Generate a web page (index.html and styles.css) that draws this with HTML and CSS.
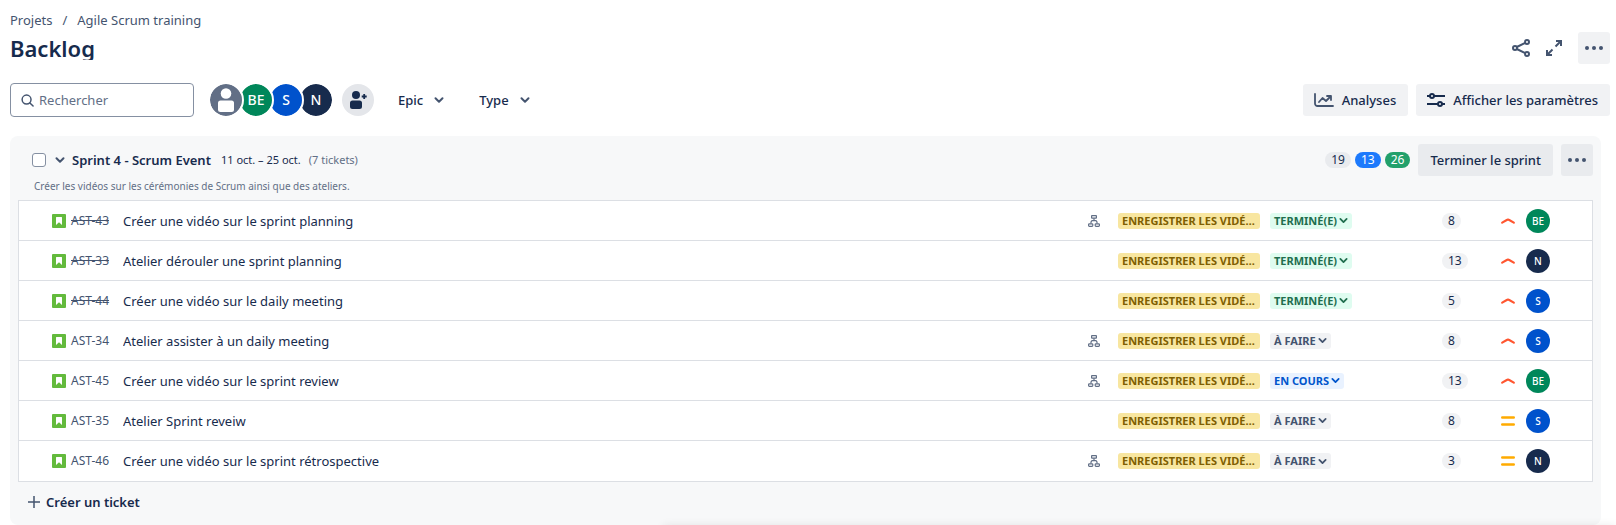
FILE: index.html
```
<!DOCTYPE html>
<html lang="fr">
<head>
    <meta charset="UTF-8">
    <meta name="viewport" content="width=device-width, initial-scale=1.0">
    <title>Backlog - Agile Scrum training</title>
    <link rel="stylesheet" href="styles.css">
</head>
<body>

    <!-- shared icons -->
    <svg class="sprite" aria-hidden="true">
        <symbol id="chevron" viewBox="0 0 10 10"><path d="M1.5 3.3 5 6.7l3.500-3.400" fill="none" stroke="currentColor" stroke-width="2" stroke-linecap="round" stroke-linejoin="round"/></symbol>
        <symbol id="dots" viewBox="0 0 18 4"><circle cx="2" cy="2" r="2"/><circle cx="9" cy="2" r="2"/><circle cx="16" cy="2" r="2"/></symbol>
        <symbol id="story" viewBox="0 0 14 14"><rect width="14" height="14" rx="1" fill="#63ba3c"/><path d="M4 3.5a.5.5 0 0 1 .5-.5h5a.5.5 0 0 1 .5.5V11L7 8.300 4 11z" fill="#fff"/></symbol>
        <symbol id="subtasks" viewBox="0 0 12 12"><g fill="none" stroke="currentColor" stroke-width="1.2"><rect x="3.6" y=".6" width="4.8" height="2.6" rx=".4"/><path d="M6 3.2v2.4M3 8.6V7l1-1.3h4L9 7v1.6"/><rect x=".6" y="8.8" width="4.2" height="2.6" rx=".8"/><rect x="7.2" y="8.8" width="4.2" height="2.6" rx=".8"/></g></symbol>
        <symbol id="high" viewBox="0 0 14 6"><path d="M1.2 4.6 6.2 1.8a1.500 1.500 0 0 1 1.600 0l5 2.800" fill="none" stroke="#ff5630" stroke-width="2.2" stroke-linecap="round"/></symbol>
        <symbol id="medium" viewBox="0 0 14 10"><path d="M1.200 1.500h11.600M1.200 8.500h11.600" stroke="#ffab00" stroke-width="2.400" stroke-linecap="round"/></symbol>
    </svg>

    <header class="page-header">
        <nav class="breadcrumb">
            <a href="#">Projets</a>
            <span>/</span>
            <a href="#">Agile Scrum training</a>
        </nav>
        <div class="title-row">
            <h1>Backlog</h1>
            <div class="title-actions">
                <button class="icon-btn" aria-label="Partager">
                    <svg width="18" height="18" viewBox="0 0 18 18" fill="none" stroke="currentColor" stroke-width="2"><circle cx="3" cy="9" r="2"/><circle cx="15" cy="3" r="2"/><circle cx="15" cy="15" r="2"/><path d="M4.800 8 13.200 3.900M4.800 10l8.400 4.100"/></svg>
                </button>
                <button class="icon-btn" aria-label="Plein écran">
                    <svg width="16" height="16" viewBox="0 0 16 16" fill="none" stroke="currentColor" stroke-width="2"><path d="M10 1h5v5M15 1 9.500 6.500M6 15H1v-5M1 15l5.500-5.500"/></svg>
                </button>
                <button class="btn more" aria-label="Plus"><svg width="18" height="4"><use href="#dots"/></svg></button>
            </div>
        </div>
    </header>

    <div class="toolbar">
        <label class="search">
            <svg width="13" height="13" viewBox="0 0 14 14" fill="none" stroke="currentColor" stroke-width="1.600" stroke-linecap="round"><circle cx="6" cy="6" r="4.800"/><path d="m9.600 9.600 3.400 3.400"/></svg>
            <input type="text" placeholder="Rechercher" aria-label="Rechercher">
        </label>
        <div class="people">
            <button class="avatar gray" aria-label="Non assigné">
                <svg width="32" height="32" viewBox="0 0 32 32" fill="#fff"><circle cx="16" cy="9.500" r="5.300"/><path d="M8 19a2.500 2.500 0 0 1 2.500-2.500h11A2.500 2.500 0 0 1 24 19v6.500a2.500 2.500 0 0 1-2.500 2.500h-11A2.500 2.500 0 0 1 8 25.500z"/></svg>
            </button>
            <button class="avatar green">BE</button>
            <button class="avatar blue">S</button>
            <button class="avatar navy">N</button>
        </div>
        <button class="add-people" aria-label="Ajouter des personnes">
            <svg width="18" height="18" viewBox="0 0 18 18" fill="currentColor"><circle cx="7" cy="4" r="4"/><path d="M1 12a2.500 2.500 0 0 1 2.500-2.500h7A2.500 2.500 0 0 1 13 12v3.500a2.500 2.500 0 0 1-2.500 2.500h-7A2.500 2.500 0 0 1 1 15.500z"/><path d="M15.200 3v5M12.700 5.500h5" stroke="currentColor" stroke-width="1.800"/></svg>
        </button>
        <button class="filter epic-filter">Epic <svg width="10" height="10"><use href="#chevron"/></svg></button>
        <button class="filter">Type <svg width="10" height="10"><use href="#chevron"/></svg></button>
        <div class="toolbar-right">
            <button class="btn analyses">
                <svg width="20" height="14" viewBox="0 0 20 14" fill="none" stroke="currentColor" stroke-width="1.800" stroke-linecap="round" stroke-linejoin="round"><path d="M1 1v9.500A2.500 2.500 0 0 0 3.500 13H19"/><path d="m5 9 3.500-4 3.500 3 4.500-4.500M13 3h4v4"/></svg>
                Analyses
            </button>
            <button class="btn settings">
                <svg width="18" height="14" viewBox="0 0 18 14" fill="none" stroke="currentColor" stroke-width="2"><path d="M0 3h3M7 3h11M0 11h11M15 11h3"/><circle cx="5" cy="3" r="2"/><circle cx="13" cy="11" r="2"/></svg>
                Afficher les paramètres
            </button>
        </div>
    </div>

    <main class="sprint">
        <div class="sprint-header">
            <input type="checkbox" class="check" aria-label="Sélectionner le sprint">
            <button class="toggle" aria-label="Réduire"><svg width="10" height="10"><use href="#chevron"/></svg></button>
            <h2>Sprint 4 - Scrum Event</h2>
            <span class="dates">11 oct. – 25 oct.</span>
            <span class="count">(7 tickets)</span>
            <div class="sprint-right">
                <span class="badge">19</span>
                <span class="badge progress">13</span>
                <span class="badge done">26</span>
                <button class="btn finish">Terminer le sprint</button>
                <button class="btn more" aria-label="Plus"><svg width="18" height="4"><use href="#dots"/></svg></button>
            </div>
        </div>
        <p class="goal">Créer les vidéos sur les cérémonies de Scrum ainsi que des ateliers.</p>

        <ul class="issues">
            <li class="issue">
                <svg class="type" width="14" height="14"><use href="#story"/></svg>
                <a class="key closed" href="#">AST-43</a>
                <span class="summary">Créer une vidéo sur le sprint planning</span>
                <span class="sub"><svg width="12" height="12"><use href="#subtasks"/></svg></span>
                <span class="epic">Enregistrer les vidé…</span>
                <span class="state"><button class="status finished">Terminé(e) <svg width="9" height="9"><use href="#chevron"/></svg></button></span>
                <span class="points"><span class="badge">8</span></span>
                <svg class="prio" width="14" height="6"><use href="#high"/></svg>
                <span class="avatar small green">BE</span>
            </li>
            <li class="issue">
                <svg class="type" width="14" height="14"><use href="#story"/></svg>
                <a class="key closed" href="#">AST-33</a>
                <span class="summary">Atelier dérouler une sprint planning</span>
                <span class="sub"></span>
                <span class="epic">Enregistrer les vidé…</span>
                <span class="state"><button class="status finished">Terminé(e) <svg width="9" height="9"><use href="#chevron"/></svg></button></span>
                <span class="points"><span class="badge">13</span></span>
                <svg class="prio" width="14" height="6"><use href="#high"/></svg>
                <span class="avatar small navy">N</span>
            </li>
            <li class="issue">
                <svg class="type" width="14" height="14"><use href="#story"/></svg>
                <a class="key closed" href="#">AST-44</a>
                <span class="summary">Créer une vidéo sur le daily meeting</span>
                <span class="sub"></span>
                <span class="epic">Enregistrer les vidé…</span>
                <span class="state"><button class="status finished">Terminé(e) <svg width="9" height="9"><use href="#chevron"/></svg></button></span>
                <span class="points"><span class="badge">5</span></span>
                <svg class="prio" width="14" height="6"><use href="#high"/></svg>
                <span class="avatar small blue">S</span>
            </li>
            <li class="issue">
                <svg class="type" width="14" height="14"><use href="#story"/></svg>
                <a class="key" href="#">AST-34</a>
                <span class="summary">Atelier assister à un daily meeting</span>
                <span class="sub"><svg width="12" height="12"><use href="#subtasks"/></svg></span>
                <span class="epic">Enregistrer les vidé…</span>
                <span class="state"><button class="status">À faire <svg width="9" height="9"><use href="#chevron"/></svg></button></span>
                <span class="points"><span class="badge">8</span></span>
                <svg class="prio" width="14" height="6"><use href="#high"/></svg>
                <span class="avatar small blue">S</span>
            </li>
            <li class="issue">
                <svg class="type" width="14" height="14"><use href="#story"/></svg>
                <a class="key" href="#">AST-45</a>
                <span class="summary">Créer une vidéo sur le sprint review</span>
                <span class="sub"><svg width="12" height="12"><use href="#subtasks"/></svg></span>
                <span class="epic">Enregistrer les vidé…</span>
                <span class="state"><button class="status doing">En cours <svg width="9" height="9"><use href="#chevron"/></svg></button></span>
                <span class="points"><span class="badge">13</span></span>
                <svg class="prio" width="14" height="6"><use href="#high"/></svg>
                <span class="avatar small green">BE</span>
            </li>
            <li class="issue">
                <svg class="type" width="14" height="14"><use href="#story"/></svg>
                <a class="key" href="#">AST-35</a>
                <span class="summary">Atelier Sprint reveiw</span>
                <span class="sub"></span>
                <span class="epic">Enregistrer les vidé…</span>
                <span class="state"><button class="status">À faire <svg width="9" height="9"><use href="#chevron"/></svg></button></span>
                <span class="points"><span class="badge">8</span></span>
                <svg class="prio" width="14" height="10"><use href="#medium"/></svg>
                <span class="avatar small blue">S</span>
            </li>
            <li class="issue">
                <svg class="type" width="14" height="14"><use href="#story"/></svg>
                <a class="key" href="#">AST-46</a>
                <span class="summary">Créer une vidéo sur le sprint rétrospective</span>
                <span class="sub"><svg width="12" height="12"><use href="#subtasks"/></svg></span>
                <span class="epic">Enregistrer les vidé…</span>
                <span class="state"><button class="status">À faire <svg width="9" height="9"><use href="#chevron"/></svg></button></span>
                <span class="points"><span class="badge">3</span></span>
                <svg class="prio" width="14" height="10"><use href="#medium"/></svg>
                <span class="avatar small navy">N</span>
            </li>
        </ul>

        <button class="create">
            <svg width="12" height="12" viewBox="0 0 12 12" stroke="currentColor" stroke-width="1.500"><path d="M6 0v12M0 6h12"/></svg>
            Créer un ticket
        </button>
    </main>

    <div class="drawer"></div>

</body>
</html>
```
FILE: styles.css
```
* {
    box-sizing: border-box;
}
body {
    margin: 0;
    padding: 10px 6px 0 10px;
    font-family: "Noto Sans", "Open Sans", sans-serif;
    font-size: 13px;
    line-height: 20px;
    color: #172b4d;
    background: #fff;
}
button {
    font: inherit;
    color: inherit;
    border: none;
    padding: 0;
    background: none;
    cursor: pointer;
}
a {
    color: inherit;
    text-decoration: none;
}
svg {
    display: block;
    flex-shrink: 0;
}
.sprite {
    display: none;
}

/* header */
.breadcrumb {
    display: flex;
    gap: 10px;
    color: #44546f;
}
.title-row {
    display: flex;
    align-items: center;
    justify-content: space-between;
    height: 36px;
}
h1 {
    margin: 0;
    font-size: 22px;
    font-weight: 600;
    line-height: 24px;
    overflow: hidden;
}
.title-actions {
    display: flex;
    align-items: center;
    gap: 16px;
    color: #44546f;
}
.btn {
    display: flex;
    align-items: center;
    gap: 8px;
    height: 32px;
    padding: 0 12px;
    font-weight: 500;
    background: #f1f2f4;
    border-radius: 3px;
}
.more {
    justify-content: center;
    width: 32px;
    padding: 0;
    color: #44546f;
    fill: currentColor;
}

/* toolbar */
.toolbar {
    display: flex;
    align-items: center;
    height: 34px;
    margin: 17px 0 19px;
}
.search {
    display: flex;
    align-items: center;
    gap: 5px;
    width: 184px;
    height: 34px;
    padding: 0 10px;
    color: #44546f;
    border: 1px solid #8590a2;
    border-radius: 4px;
}
.search input {
    width: 100%;
    min-width: 0;
    padding: 0;
    font: inherit;
    border: none;
    outline: none;
    background: none;
}
.search input::placeholder {
    color: #626f86;
    opacity: 1;
}
.people {
    display: flex;
    margin-left: 14px;
}
.avatar {
    display: flex;
    align-items: center;
    justify-content: center;
    width: 36px;
    height: 36px;
    margin-right: -6px;
    font-size: 14px;
    font-weight: 500;
    color: #fff;
    border: 2px solid #fff;
    border-radius: 50%;
    background-clip: padding-box;
}
/* the first person stays on top of the stack */
.people .gray {
    z-index: 3;
}
.people .green {
    z-index: 2;
}
.people .blue {
    z-index: 1;
}
.gray {
    background-color: #626f86;
}
.green {
    background-color: #00875a;
}
.blue {
    background-color: #0052cc;
}
.navy {
    background-color: #172b4d;
}
.add-people {
    display: flex;
    align-items: center;
    justify-content: center;
    width: 32px;
    height: 32px;
    margin-left: 14px;
    border-radius: 50%;
    background: #e4e6ea;
}
.filter {
    display: flex;
    align-items: center;
    gap: 11px;
    margin-left: 35px;
    font-weight: 500;
}
.filter svg {
    color: #44546f;
}
.epic-filter {
    margin-left: 24px;
}
.toolbar-right {
    display: flex;
    gap: 8px;
    margin-left: auto;
}
.analyses svg {
    color: #44546f;
}
.analyses,
.settings {
    padding: 0 12px 0 11px;
}

/* sprint panel */
.sprint {
    margin-right: 9px;
    padding: 8px 8px 13px;
    background: #f7f8f9;
    border-radius: 8px;
}
.sprint-header {
    display: flex;
    align-items: center;
    height: 32px;
    padding-left: 14px;
}
.check {
    appearance: none;
    width: 14px;
    height: 14px;
    margin: 0;
    border: 1px solid #8590a2;
    border-radius: 3px;
    background: #fff;
}
.toggle {
    margin: 0 7px 0 9px;
    color: #44546f;
}
h2 {
    margin: 0;
    font-size: 13px;
    font-weight: 600;
}
.dates {
    margin-left: 10px;
    font-size: 11px;
}
.count {
    margin-left: 8px;
    font-size: 11px;
    color: #626f86;
}
.sprint-right {
    display: flex;
    align-items: center;
    gap: 4px;
    margin-left: auto;
}
.sprint-right .btn {
    margin-left: 4px;
    background: #e9ebee;
}
.badge {
    display: block;
    width: fit-content;
    min-width: 19px;
    padding: 0 6px;
    font-size: 12px;
    line-height: 16px;
    text-align: center;
    background: #f1f2f4;
    border-radius: 8px;
}
.sprint-right .badge {
    background: #e9ebee;
}
.sprint-right .progress {
    color: #fff;
    background: #1d7afc;
}
.sprint-right .done {
    color: #fff;
    background: #22a06b;
}
.goal {
    margin: 0 0 4px 16px;
    font-size: 10px;
    color: #626f86;
}

/* issues */
.issues {
    margin: 0;
    padding: 0;
    list-style: none;
    background: #fff;
    border: 1px solid #dcdfe4;
}
.issue {
    display: grid;
    grid-template-columns: 14px 47px 1fr 30px 152px 172px 59px 25px 24px;
    align-items: center;
    height: 40px;
    padding: 0 42px 0 33px;
    border-bottom: 1px solid #dcdfe4;
}
.issue:last-child {
    border-bottom: none;
}
.key {
    margin-left: 5px;
    font-size: 12px;
    color: #44546f;
}
.closed {
    text-decoration: line-through;
}
.summary {
    margin-left: 10px;
    overflow: hidden;
    white-space: nowrap;
    text-overflow: ellipsis;
}
.sub {
    color: #626f86;
}
.epic,
.status {
    font-size: 11px;
    font-weight: 700;
    line-height: 16px;
    text-transform: uppercase;
    white-space: nowrap;
    border-radius: 3px;
}
.epic {
    margin-right: 10px;
    padding: 0 4px;
    color: #7f5f01;
    background: #f8e6a0;
}
.status {
    display: flex;
    align-items: center;
    gap: 2px;
    padding: 0 4px;
    color: #44546f;
    background: #f1f2f4;
}
.finished {
    color: #216e4e;
    background: #dffcf0;
}
.doing {
    color: #0055cc;
    background: #e9f2ff;
}
.small {
    width: 24px;
    height: 24px;
    margin: 0;
    font-size: 10px;
    border: none;
}

.create {
    display: flex;
    align-items: center;
    gap: 6px;
    margin: 10px 0 0 10px;
    font-weight: 600;
}
.create svg {
    color: #44546f;
}

/* closed drawer, only its shadow shows over the bottom edge */
.drawer {
    position: fixed;
    right: 0;
    bottom: -20px;
    left: 41%;
    height: 20px;
    box-shadow: 0 0 8px rgba(0, 0, 0, 0.08);
}
```
